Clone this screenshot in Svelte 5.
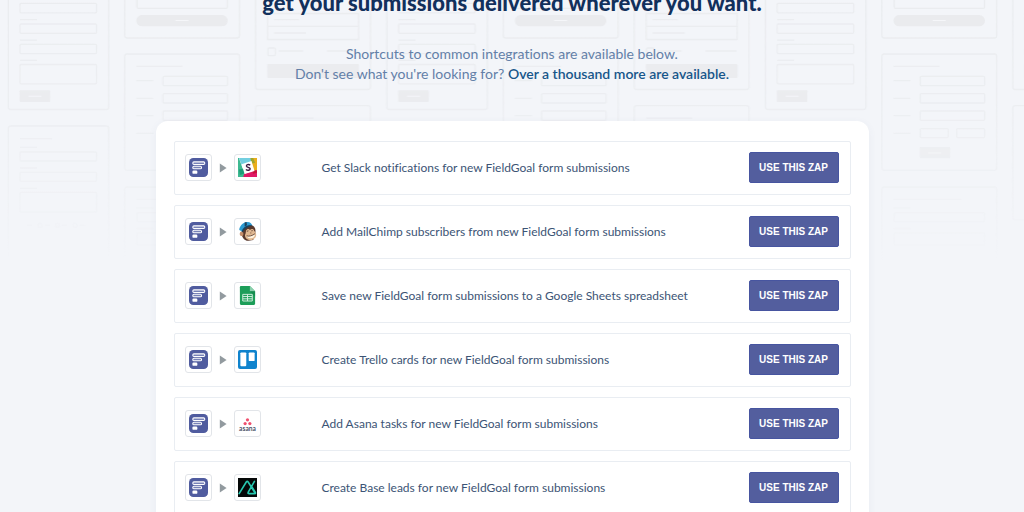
<script>
  const zaps = [
    { app: 'slack', title: 'Get Slack notifications for new FieldGoal form submissions' },
    { app: 'mailchimp', title: 'Add MailChimp subscribers from new FieldGoal form submissions' },
    { app: 'sheets', title: 'Save new FieldGoal form submissions to a Google Sheets spreadsheet' },
    { app: 'trello', title: 'Create Trello cards for new FieldGoal form submissions' },
    { app: 'asana', title: 'Add Asana tasks for new FieldGoal form submissions' },
    { app: 'base', title: 'Create Base leads for new FieldGoal form submissions' }
  ];
</script>

<div class="page">
  <!-- Repeating form wireframes, fading out towards the list -->
  <svg class="backdrop" aria-hidden="true">
    <defs>
      <linearGradient id="fade" x1="0" y1="0" x2="0" y2="1">
        <stop offset="0" stop-color="#fff" />
        <stop offset="0.4" stop-color="#fff" stop-opacity="0.8" />
        <stop offset="1" stop-color="#fff" stop-opacity="0" />
      </linearGradient>
      <mask id="fade-mask"><rect width="100%" height="260" fill="url(#fade)" /></mask>
      <pattern id="forms" width="378.6" height="260" patternUnits="userSpaceOnUse">
        <g fill="none" stroke="#eaecef" stroke-width="1.3">
          <rect x="8.3" y="-10" width="100.4" height="119.5" rx="2.5" />
          <rect x="20" y="3.3" width="76.5" height="9.5" rx="1" />
          <rect x="20" y="24" width="76.5" height="9.3" rx="1" />
          <rect x="20" y="44.3" width="76.5" height="9.3" rx="1" />
          <rect x="20" y="64.5" width="76.5" height="19.3" rx="1" />
          <path d="M20 19.7h17M20 40.2h17M20 60.4h17" />
          <rect x="8.3" y="126" width="100.4" height="150" rx="2.5" />
          <rect x="20" y="152" width="76.5" height="9" rx="1" />
          <rect x="20" y="172.3" width="76.5" height="9" rx="1" />
          <rect x="20" y="192.3" width="76.5" height="19.7" rx="1" />
          <path d="M20 138.6h32M20 147.4h17M20 168h17M20 188.3h17" />
          <path d="M27 225.4h5M45 225.4h5M62 225.4h5M80 225.4h5" />
          <circle cx="40" cy="225.4" r="2" /><circle cx="57.5" cy="225.4" r="2" /><circle cx="75" cy="225.4" r="2" />

          <rect x="124.7" y="-10" width="114.8" height="48" rx="2.5" />
          <rect x="137" y="-10" width="90.3" height="18.3" rx="1" />
          <rect x="124.7" y="54" width="114.8" height="116.3" rx="2.5" />
          <path d="M136.3 66.4h46M136.3 80.7h17M136.3 98.4h17M136.3 115.7h17M136.3 133.3h17" />
          <rect x="163" y="76.4" width="64.5" height="9.3" rx="1" />
          <rect x="163" y="93.7" width="64.5" height="9.3" rx="1" />
          <rect x="163" y="111" width="64.5" height="9.3" rx="1" />
          <rect x="163" y="128.6" width="28" height="9" rx="1" />
          <rect x="199.5" y="128.6" width="28" height="9" rx="1" />
          <rect x="124.7" y="187" width="114.8" height="90" rx="2.5" />
          <path d="M136.3 199.3h68M136.3 208h17M136.3 228.5h17" />
          <rect x="137" y="212.6" width="90.3" height="9" rx="1" />
          <rect x="137" y="233" width="90.3" height="12" rx="1" />

          <rect x="255.6" y="-10" width="114.8" height="99.5" rx="2.5" />
          <path d="M267.6 13.5h91v26h-91zM267.6 26.3h91M274 19.7h25M274 33h32M279 51h24M327 51h31" />
          <rect x="268" y="48" width="7.3" height="7.6" rx="1" />
          <rect x="255.6" y="105.7" width="114.8" height="114" rx="2.5" />
          <path d="M267.6 118.2h46" />
        </g>
        <g fill="#e9eaed">
          <rect x="19.6" y="90.3" width="30.6" height="11.6" rx="1" />
          <rect x="136.3" y="15" width="91.4" height="11.3" rx="5.6" />
          <rect x="162.5" y="147" width="30.5" height="11.3" rx="1" />
          <rect x="267.3" y="64" width="91.6" height="14" rx="1" />
        </g>
        <path d="M28.5 96.2h13M175.5 20.6h13M171 153h13" stroke="#f5f6f9" />
      </pattern>
    </defs>
    <rect width="100%" height="260" fill="url(#forms)" mask="url(#fade-mask)" />
  </svg>

  <header>
    <h1>get your submissions delivered wherever you want.</h1>
    <p>
      Shortcuts to common integrations are available below.<br />
      Don't see what you're looking for? <a href="#more">Over a thousand more are available.</a>
    </p>
  </header>

  <main>
    <ul>
      {#each zaps as zap (zap.app)}
        <li>
          <div class="apps">
            <span class="tile">
              <svg viewBox="0 0 20 20">
                <rect width="20" height="20" rx="4.5" fill="#505c9f" />
                <g fill="#7883b8" stroke="#fff" stroke-width="1.1">
                  <rect x="4" y="4.1" width="12.6" height="2.7" rx="1.2" />
                  <rect x="4" y="8.7" width="9.2" height="2.7" rx="1.2" />
                </g>
                <rect x="3.6" y="13.2" width="5.2" height="3.5" rx="1.3" fill="#fff" />
              </svg>
            </span>
            <svg class="arrow" viewBox="0 0 8 10"><path d="M.8.6v8.8L7.6 5z" /></svg>
            <span class="tile">
              <svg viewBox="0 0 20 20">
                {#if zap.app === 'slack'}
                  <path fill="#3eb991" d="M0 0h1l7 20H0z" />
                  <path fill="#73cfe0" d="M1 0h12.5l1 5L4 8z" />
                  <path fill="#e9ae1c" d="M13.5 0H20v13l-4 1.500z" />
                  <path fill="#9fa52d" d="M13 0h3l2 5-3.500 1z" />
                  <path fill="#1f9c78" d="M1 12l5-1 1.500 5L2 18z" />
                  <path fill="#e01765" d="M5.500 20l1-3.500L18 13l2 1v6z" />
                  <path fill="#c6103a" d="M15 14l5-1.500v3l-4 1z" />
                  <path fill="#fff" d="M3.800 6.500L14.200 3.200l3.200 10.400L7 16.900z" />
                  <path fill="none" stroke="#3c1941" stroke-width="1.500" d="M12.900 7.500C11 6.400 8.700 7 8.900 8.600c.3 1.600 3.700.9 3.900 2.800.1 1.800-2.900 1.900-4.500.7" />
                {:else if zap.app === 'mailchimp'}
                  <path fill="#59392c" d="M4 7C5 4 14 1 17 5c1.500 2 1.500 4 1.300 6.500L16 19l-5 .8C7 20 5 17 4 14z" />
                  <path fill="#c58e6b" d="M2.200 11c1-1.800 3.300-.8 3.500 1s-.8 3-2.200 2.800S1.200 12.600 2.200 11z" />
                  <path fill="#e1b992" d="M8.500 9c1-2.500 3.200-2 4.200-.5 1-1.700 4-1.500 4.300 1 2 1.300 2.700 4 1.700 6-1.200 2.700-5 4.300-8 3.200-3-1-4.200-4.400-2.700-6.700z" />
                  <path fill="#fff3df" d="M9 14.500c2.500 1 6 0 9-2.200 0 3.200-2 4.700-4.500 4.900-2 .1-3.700-.9-4.500-2.700z" />
                  <path fill="none" stroke="#4a3028" stroke-width=".8" d="M9 14.500c2.500 1 6 0 9-2.200M9.300 9.800l1.700-.5M14 9.300l1.500-.2M13 11.500l1 .1" />
                  <path fill="#2c9ad0" d="M1.300 8.300C1.500 4.500 5 .5 9 0c3-.3 5 1.200 6 3.300C10 3.500 6.500 6.500 4.300 10z" />
                  <path fill="#1c425d" d="M4 10c.8-3.500 4-6 7.500-6.500 2.500-.4 3.500 0 3.800.8-3.500 0-8.300 2.500-10.500 6.700zM7 .5l2-.5.5 3.300L7 4.700z" />
                {:else if zap.app === 'sheets'}
                  <path fill="#1d9e59" d="M3 0h9.500L18 5.500v13.300Q18 20 16.800 20H3.200Q2 20 2 18.800V1.200Q2 0 3 0z" />
                  <path fill="#8bd0ad" d="M12.500 0L18 5.500h-5.500z" />
                  <path fill="#12804a" d="M12.500 5.500H18V11z" opacity=".6" />
                  <path fill="none" stroke="#d5efe0" d="M5 8.800h10v7H5zM5 11.100h10M5 13.500h10M10 8.800v7" />
                {:else if zap.app === 'trello'}
                  <rect width="20" height="20" rx="2" fill="#0f83cd" />
                  <rect x="2.500" y="2.500" width="6.200" height="14.500" rx="1" fill="#fff" />
                  <rect x="11.300" y="2.500" width="6.200" height="9.200" rx="1" fill="#fff" />
                {:else if zap.app === 'asana'}
                  <g fill="#f0506e">
                    <circle cx="10" cy="6.100" r="1.700" />
                    <circle cx="7.500" cy="10.100" r="1.700" />
                    <circle cx="12.500" cy="10.100" r="1.700" />
                  </g>
                  <text x="10" y="17.500" text-anchor="middle">asana</text>
                {:else}
                  <rect width="20" height="20" fill="#050808" />
                  <path fill="none" stroke="#28c8b0" stroke-width="1.700" stroke-linejoin="round" stroke-linecap="round" d="M1.200 16.500L8.700 4.200q1-1.400 2 0l7.600 12.100M17.300 3.500l-6.500 11.300q-.8 1.700 1 1.700h5.500q1.600 0 .8-1.500L14.500 9" />
                {/if}
              </svg>
            </span>
          </div>
          <span class="title">{zap.title}</span>
          <button type="button">USE THIS ZAP</button>
        </li>
      {/each}
    </ul>
  </main>
</div>

<style>
  :global(body) {
    margin: 0;
    background: #f3f5f9;
  }
  .page {
    position: relative;
    display: flex;
    flex-direction: column;
    align-items: center;
    overflow: hidden;
    font-family: Lato, "Open Sans", sans-serif;
    font-variant-ligatures: none;
  }
  .backdrop {
    position: absolute;
    top: 0;
    left: 0;
    width: 100%;
    height: 260px;
  }
  header {
    position: relative;
    margin-top: -11px;
    text-align: center;
  }
  h1 {
    margin: 0;
    color: #12305c;
    font-size: 22px;
    font-weight: 900;
    line-height: 28px;
  }
  p {
    margin: 27px 0 37px;
    color: #6380a8;
    font-size: 14px;
    line-height: 20px;
  }
  a {
    color: #17568a;
    font-weight: 600;
    text-decoration: none;
  }
  main {
    position: relative;
    box-sizing: border-box;
    width: calc(100% - 32px);
    max-width: 713px;
    padding: 20px 18px;
    border-radius: 12px;
    background: #fff;
    box-shadow: 0 2px 8px rgba(60, 80, 130, 0.06);
  }
  ul {
    display: flex;
    flex-direction: column;
    gap: 10px;
    margin: 0;
    padding: 0;
    list-style: none;
  }
  li {
    display: grid;
    grid-template-columns: 137px 1fr auto;
    align-items: center;
    padding: 10px 11px 11px 10px;
    border: 1px solid #e9edf2;
    border-radius: 2px;
  }
  .apps {
    display: flex;
    align-items: center;
    gap: 7px;
  }
  .tile {
    display: flex;
    padding: 3px;
    border: 1px solid #e2e5e9;
    border-radius: 3px;
    background: #fff;
  }
  .tile svg {
    width: 19px;
    height: 19px;
  }
  .tile text {
    fill: #4c5468;
    font-family: Lato, sans-serif;
    font-size: 7px;
    font-weight: 700;
  }
  .arrow {
    width: 8px;
    height: 10px;
    fill: #929a9f;
  }
  .title {
    color: #3c5475;
    font-size: 12px;
    line-height: 20px;
  }
  button {
    width: 90px;
    height: 31px;
    padding: 0;
    border: 1px solid #4755a0;
    border-radius: 2px;
    background: #535e9e;
    color: #fff;
    font-family: "Liberation Sans", Arial, sans-serif;
    font-size: 10px;
    font-weight: 700;
    cursor: pointer;
  }
</style>
